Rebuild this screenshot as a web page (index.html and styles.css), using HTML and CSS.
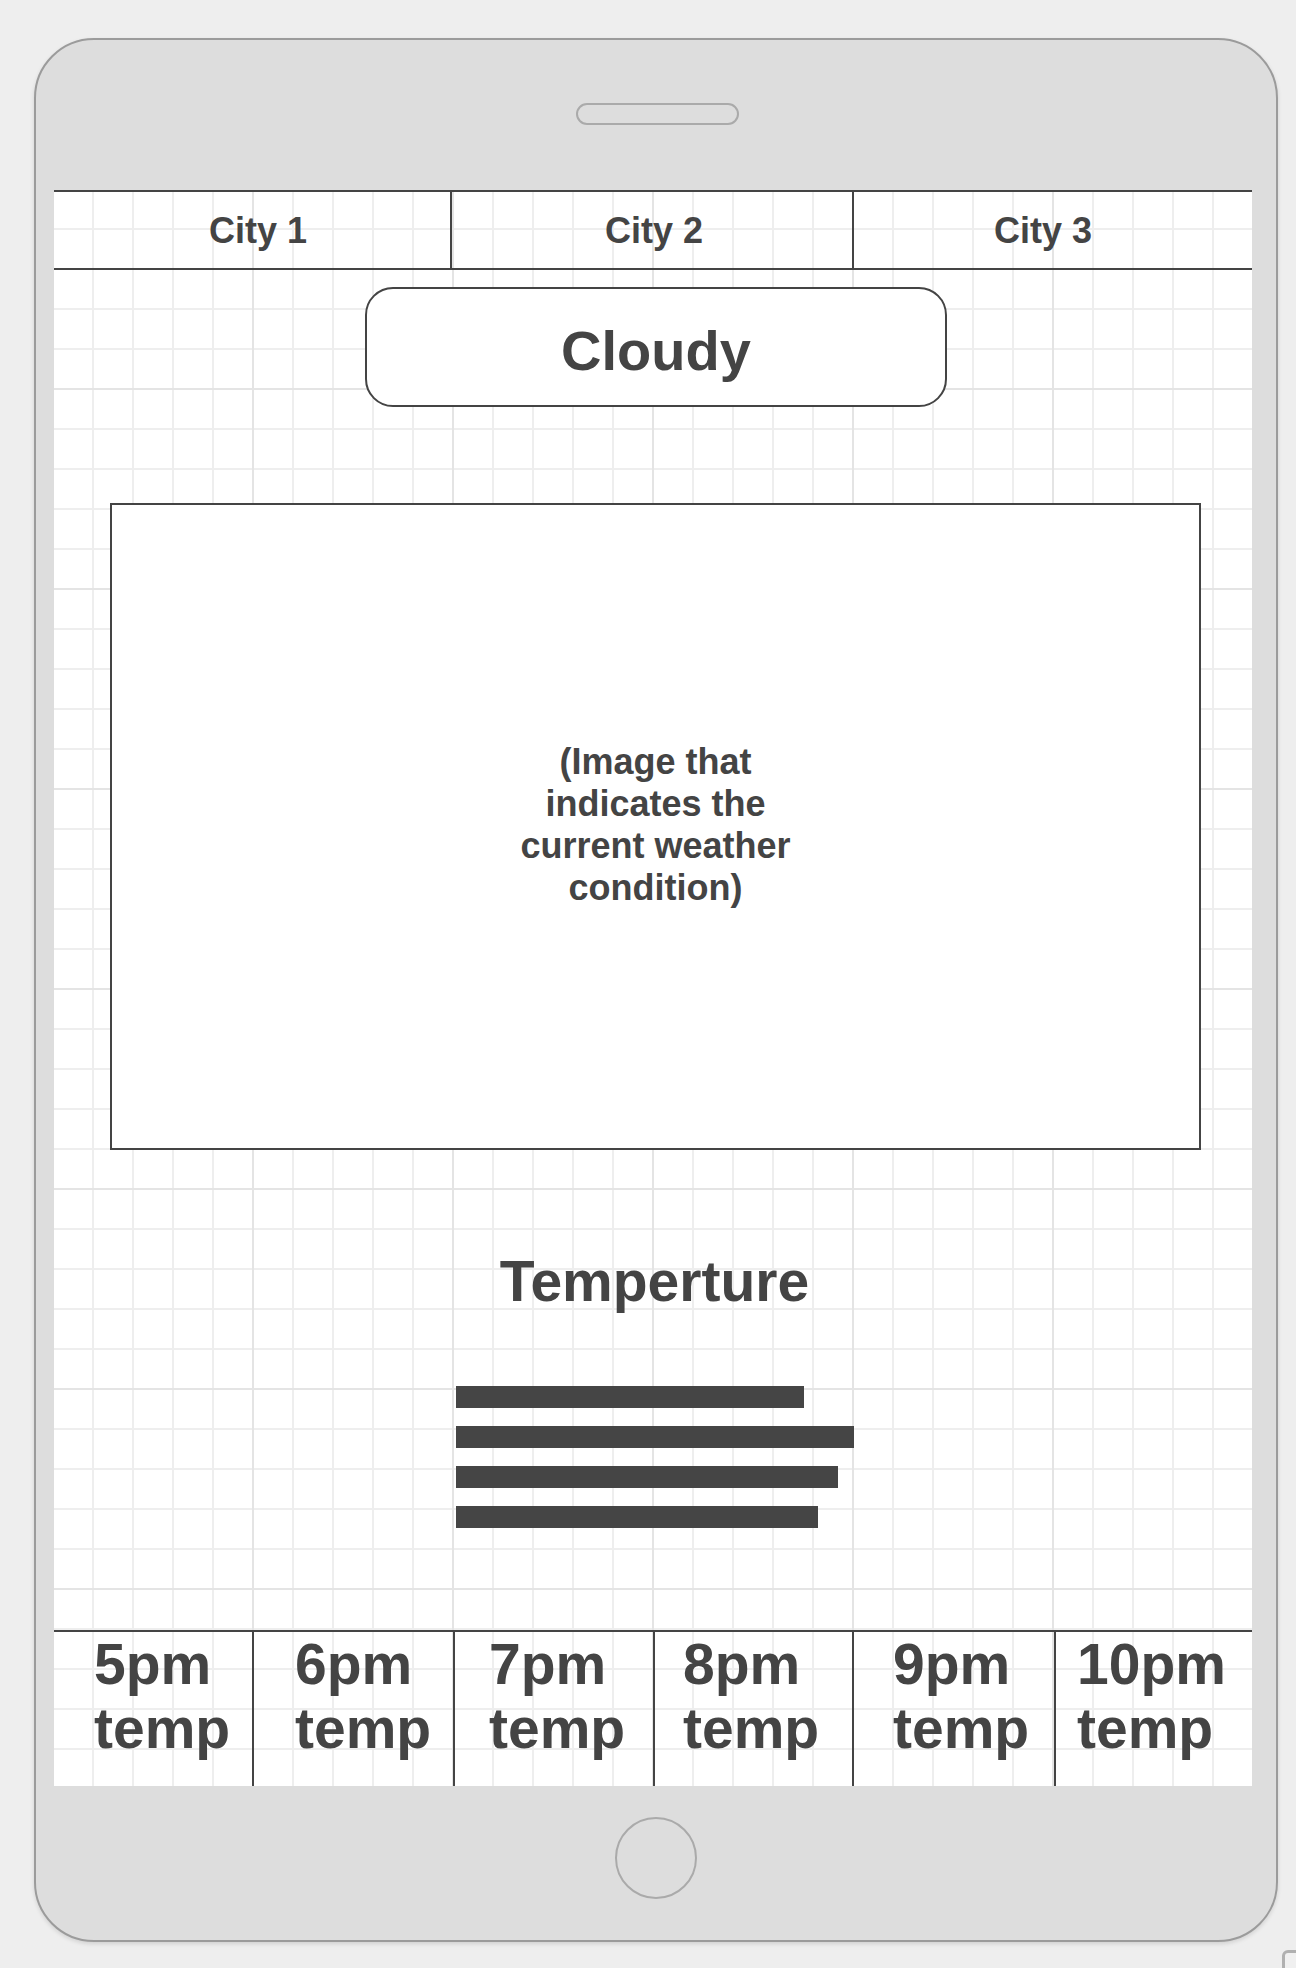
FILE: index.html
```html
<!DOCTYPE html>
<html lang="en">
<head>
<meta charset="utf-8">
<title>Weather app wireframe</title>
<link rel="stylesheet" href="styles.css">
</head>
<body>
<div class="device">
  <div class="speaker"></div>
  <div class="screen">
    <div class="tabs">
      <div class="tab tab-1">City 1</div>
      <div class="tab tab-2">City 2</div>
      <div class="tab tab-3">City 3</div>
    </div>
    <div class="condition">Cloudy</div>
    <div class="image-box">
      <p class="image-caption">(Image that<br>indicates the<br>current weather<br>condition)</p>
    </div>
    <h2 class="temp-title">Temperture</h2>
    <div class="bars">
      <span class="bar" style="width:348px"></span>
      <span class="bar" style="width:398px"></span>
      <span class="bar" style="width:382px"></span>
      <span class="bar" style="width:362px"></span>
    </div>
    <div class="hours">
      <div class="hour hour-1">5pm<br>temp</div>
      <div class="hour hour-2">6pm<br>temp</div>
      <div class="hour hour-3">7pm<br>temp</div>
      <div class="hour hour-4">8pm<br>temp</div>
      <div class="hour hour-5">9pm<br>temp</div>
      <div class="hour hour-6">10pm<br>temp</div>
    </div>
  </div>
  <div class="home"></div>
</div>
<div class="corner-handle"></div>
</body>
</html>
```

FILE: styles.css
```css
html, body {
  margin: 0;
  height: 100%;
}

body {
  box-sizing: border-box;
  padding: 38px 0 0 34px;
  background: #eeeeee;
  font-family: "Liberation Sans", Arial, Helvetica, sans-serif;
  color: #444444;
  overflow: hidden;
}

.device {
  box-sizing: border-box;
  width: 1244px;
  height: 1904px;
  border: 2px solid #9b9b9b;
  border-radius: 60px;
  background: #dddddd;
  box-shadow: 0 2px 4px rgba(0, 0, 0, 0.12);
  display: flex;
  flex-direction: column;
  align-items: center;
}

.speaker {
  box-sizing: border-box;
  width: 163px;
  height: 22px;
  margin: 63px 0 0 3px;
  border: 2px solid #aaaaaa;
  border-radius: 11px;
}

.screen {
  box-sizing: border-box;
  width: 1198px;
  height: 1596px;
  margin: 65px 24px 0 18px;
  background-color: #ffffff;
  background-image:
    linear-gradient(90deg, #e4e4e4 2px, transparent 2px),
    linear-gradient(180deg, #e4e4e4 2px, transparent 2px),
    linear-gradient(90deg, #eeeeee 2px, transparent 2px),
    linear-gradient(180deg, #eeeeee 2px, transparent 2px);
  background-size: 200px 200px, 200px 200px, 40px 40px, 40px 40px;
  background-position: -2px -2px;
  display: flex;
  flex-direction: column;
}

.tabs {
  box-sizing: border-box;
  height: 80px;
  border-top: 2px solid #444444;
  border-bottom: 2px solid #444444;
  display: grid;
  grid-template-columns: 396px 402px 1fr;
}

.tab {
  display: flex;
  align-items: center;
  justify-content: center;
  padding-top: 2px;
  font-size: 36px;
  font-weight: bold;
}

.tab-1 { padding-left: 12px; }
.tab-2 { padding-left: 4px; border-left: 2px solid #444444; }
.tab-3 { padding-right: 20px; border-left: 2px solid #444444; }

.condition {
  box-sizing: border-box;
  align-self: center;
  width: 582px;
  height: 120px;
  margin: 17px 0 0 6px;
  padding-top: 7px;
  border: 2px solid #444444;
  border-radius: 28px;
  background: #ffffff;
  font-size: 56px;
  font-weight: bold;
  line-height: 109px;
  text-align: center;
}

.image-box {
  box-sizing: border-box;
  align-self: center;
  width: 1091px;
  height: 647px;
  margin: 96px 0 0 5px;
  border: 2px solid #444444;
  background: #ffffff;
  display: flex;
  align-items: center;
  justify-content: center;
}

.image-caption {
  margin: 0 0 4px;
  font-size: 36px;
  font-weight: bold;
  line-height: 42px;
  text-align: center;
}

.temp-title {
  margin: 99px 0 0;
  padding-left: 3px;
  font-size: 57px;
  font-weight: bold;
  line-height: 64px;
  text-align: center;
}

.bars {
  align-self: center;
  width: 398px;
  margin: 73px 0 0 4px;
  display: flex;
  flex-direction: column;
  gap: 18px;
}

.bar {
  display: block;
  height: 22px;
  background: #454545;
}

.hours {
  flex: 1;
  margin-top: 102px;
  border-top: 2px solid #444444;
  display: grid;
  grid-template-columns: 198px 201px 200px 199px 202px 1fr;
}

.hour {
  font-size: 57px;
  font-weight: bold;
  line-height: 64px;
}

.hour + .hour { border-left: 2px solid #444444; }

.hour-1 { padding-left: 40px; }
.hour-2 { padding-left: 41px; }
.hour-3 { padding-left: 34px; }
.hour-4 { padding-left: 28px; }
.hour-5 { padding-left: 39px; }
.hour-6 { padding-left: 21px; }

.home {
  box-sizing: border-box;
  width: 82px;
  height: 82px;
  margin-top: 31px;
  border: 2px solid #aaaaaa;
  border-radius: 50%;
}

.corner-handle {
  position: absolute;
  left: 1282px;
  top: 1950px;
  width: 40px;
  height: 40px;
  border: 3px solid #b0b0b0;
  border-radius: 6px;
  background: #f0f0f0;
}
```
